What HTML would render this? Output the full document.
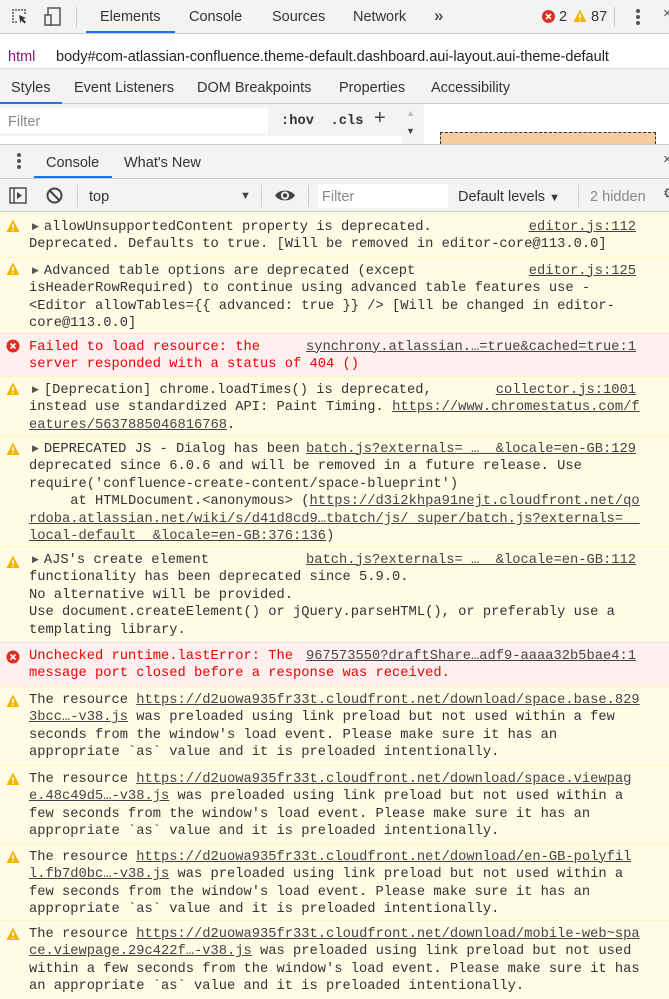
<!DOCTYPE html>
<html><head><meta charset="utf-8"><style>
*{margin:0;padding:0;box-sizing:border-box}
body{width:669px;height:999px;overflow:hidden;background:#fff;font-family:"Liberation Sans",sans-serif;font-size:14.5px;color:#333;position:relative}
.a{position:absolute}
.bar{position:absolute;left:0;width:669px}
.t{position:absolute;top:0;color:#333}
.mono{font-family:"Liberation Mono",monospace;font-size:13.75px;line-height:17.6px;white-space:pre}
.row{position:absolute;left:0;width:669px;padding:4.5px 0 0 29px;border-top:1px solid #fff5c2}
.w{background:#fffbe5;color:#333}
.e{background:#fff0f0;color:#e00;border-top-color:#ffd6d6}
.src{position:absolute;right:33px;top:4.5px;color:#444;text-decoration:underline}
.u{text-decoration:underline;color:#444}
.ic{position:absolute;left:6px;top:6px;width:14px;height:14px}
.tri{font-size:9px;color:#555;vertical-align:1px;margin:0 5px 0 3px}
</style></head><body>
<!-- top toolbar -->
<div class="bar" style="top:0;height:34px;background:#f3f3f3;border-bottom:1px solid #ccc"></div>
<svg class="a" style="left:10px;top:7px" width="20" height="20" viewBox="0 0 20 20"><path d="M7 15H3V3h12v4" fill="none" stroke="#555" stroke-width="1.5" stroke-dasharray="2 1"/><path d="M9 8l7 3-3 1 3 3-1.5 1.5-3-3-1 3z" fill="#333"/></svg>
<svg class="a" style="left:42px;top:6px" width="22" height="22" viewBox="0 0 22 22"><rect x="6" y="2" width="12" height="17" fill="none" stroke="#555" stroke-width="1.5"/><rect x="3" y="9" width="6" height="10" fill="#f3f3f3" stroke="#555" stroke-width="1.5"/></svg>
<div class="a" style="left:76px;top:7px;width:1px;height:20px;background:#ccc"></div>
<div class="t" style="left:100px;top:9px">Elements</div>
<div class="a" style="left:86px;top:31px;width:89px;height:2px;background:#1a73e8"></div>
<div class="t" style="left:189px;top:9px">Console</div>
<div class="t" style="left:272px;top:9px">Sources</div>
<div class="t" style="left:353px;top:9px">Network</div>
<div class="t" style="left:434px;top:6px;font-size:17px;font-weight:bold;color:#555">»</div>
<svg class="a" style="left:542px;top:10px" width="13" height="13"><circle cx="6.5" cy="6.5" r="6.5" fill="#d93025"/><path d="M4 4l5 5M9 4l-5 5" stroke="#fff" stroke-width="1.6"/></svg>
<div class="t" style="left:559px;top:9px">2</div>
<svg class="a" style="left:573px;top:9px" width="14" height="14"><path d="M7 0.5L13.5 13H0.5z" fill="#f4b400"/><path d="M7 5v4M7 10.5v1.3" stroke="#fff" stroke-width="1.6"/></svg>
<div class="t" style="left:591px;top:9px">87</div>
<div class="a" style="left:614px;top:7px;width:1px;height:20px;background:#ccc"></div>
<div class="a" style="left:636px;top:9px;width:4px;height:4px;border-radius:2px;background:#555;box-shadow:0 6px 0 #555,0 12px 0 #555"></div>
<div class="t" style="left:663px;top:6px;color:#555">×</div>
<!-- breadcrumb -->
<div class="bar" style="top:34px;height:35px;background:#fff;border-bottom:1px solid #ddd"></div>
<div class="t" style="left:8px;top:49px;color:#881280">html</div>
<div class="t" style="left:56px;top:49px;color:#222">body#com-atlassian-confluence.theme-default.dashboard.aui-layout.aui-theme-default</div>
<!-- styles tabs -->
<div class="bar" style="top:69px;height:35px;background:#f3f3f3;border-bottom:1px solid #ccc"></div>
<div class="t" style="left:11px;top:80px">Styles</div>
<div class="a" style="left:0;top:102px;width:62px;height:2px;background:#1a73e8"></div>
<div class="t" style="left:74px;top:80px">Event Listeners</div>
<div class="t" style="left:197px;top:80px">DOM Breakpoints</div>
<div class="t" style="left:339px;top:80px">Properties</div>
<div class="t" style="left:431px;top:80px">Accessibility</div>
<!-- filter row -->
<div class="bar" style="top:104px;height:40px;background:#f3f3f3"></div>
<div class="a" style="left:0;top:108px;width:268px;height:25px;background:#fff"></div>
<div class="t" style="left:8px;top:114px;color:#888">Filter</div>
<div class="t mono" style="left:281px;top:113px;font-weight:bold;color:#333">:hov  .cls</div>
<div class="t" style="left:374px;top:107px;font-size:20px;color:#444">+</div>
<div class="t" style="left:406px;top:108px;font-size:9px;color:#bbb">▲</div>
<div class="t" style="left:406px;top:126px;font-size:9px;color:#444">▼</div>
<div class="a" style="left:0;top:136px;width:402px;height:8px;background:#fff"></div>
<div class="a" style="left:424px;top:104px;width:245px;height:40px;background:#fff"></div>
<div class="a" style="left:440px;top:132px;width:216px;height:12px;background:#f9cc9d;border:1px dashed #333;border-bottom:none"></div>
<!-- drawer tabs -->
<div class="bar" style="top:144px;height:35px;background:#f3f3f3;border-top:1px solid #ccc;border-bottom:1px solid #ccc"></div>
<div class="a" style="left:17px;top:153px;width:4px;height:4px;border-radius:2px;background:#555;box-shadow:0 6px 0 #555,0 12px 0 #555"></div>
<div class="t" style="left:46px;top:155px">Console</div>
<div class="a" style="left:34px;top:176px;width:78px;height:2px;background:#1a73e8"></div>
<div class="t" style="left:124px;top:155px">What's New</div>
<div class="t" style="left:663px;top:152px;color:#555">×</div>
<!-- console toolbar -->
<div class="bar" style="top:179px;height:33px;background:#f3f3f3;border-bottom:1px solid #ccc"></div>
<svg class="a" style="left:9px;top:187px" width="18" height="17"><rect x="1" y="1" width="16" height="15" fill="none" stroke="#444" stroke-width="1.4"/><path d="M5 1v15" stroke="#444" stroke-width="1.4"/><path d="M8 5l5 3.5-5 3.5z" fill="#444"/></svg>
<svg class="a" style="left:46px;top:187px" width="17" height="17"><circle cx="8.5" cy="8.5" r="7" fill="none" stroke="#444" stroke-width="2"/><path d="M4 4l9 9" stroke="#444" stroke-width="2"/></svg>
<div class="a" style="left:77px;top:185px;width:1px;height:22px;background:#ccc"></div>
<div class="t" style="left:89px;top:189px">top</div>
<div class="t" style="left:240px;top:190px;font-size:11px;color:#444">▼</div>
<div class="a" style="left:261px;top:185px;width:1px;height:22px;background:#ccc"></div>
<svg class="a" style="left:274px;top:187px" width="22" height="17"><path d="M1 8.5C5 2 17 2 21 8.5 17 15 5 15 1 8.5z" fill="#444"/><circle cx="11" cy="8.5" r="4" fill="#fff"/><circle cx="11" cy="8.5" r="2.3" fill="#444"/></svg>
<div class="a" style="left:308px;top:185px;width:1px;height:22px;background:#ccc"></div>
<div class="a" style="left:318px;top:184px;width:130px;height:24px;background:#fff"></div>
<div class="t" style="left:322px;top:189px;color:#888">Filter</div>
<div class="t" style="left:458px;top:189px">Default levels <span style="font-size:11px">▼</span></div>
<div class="a" style="left:578px;top:185px;width:1px;height:22px;background:#ccc"></div>
<div class="t" style="left:590px;top:189px;color:#888">2 hidden</div>
<div class="t" style="left:663px;top:186px;color:#444">⚙</div>

<!-- messages -->
<div class="row w mono" style="top:213px;height:44px"><span class="tri">▶</span>allowUnsupportedContent property is deprecated.
Deprecated. Defaults to true. [Will be removed in editor-core@113.0.0]<span class="src">editor.js:112</span></div>
<div class="row w mono" style="top:257px;height:76px"><span class="tri">▶</span>Advanced table options are deprecated (except
isHeaderRowRequired) to continue using advanced table features use -
&lt;Editor allowTables={{ advanced: true }} /&gt; [Will be changed in editor-
core@113.0.0]<span class="src">editor.js:125</span></div>
<div class="row e mono" style="top:333px;height:43px">Failed to load resource: the
server responded with a status of 404 ()<span class="src">synchrony.atlassian.…=true&amp;cached=true:1</span></div>
<div class="row w mono" style="top:376px;height:59px"><span class="tri">▶</span>[Deprecation] chrome.loadTimes() is deprecated,
instead use standardized API: Paint Timing. <span class="u">https://www.chromestatus.com/f</span>
<span class="u">eatures/5637885046816768</span>.<span class="src">collector.js:1001</span></div>
<div class="row w mono" style="top:435px;height:111px"><span class="tri">▶</span>DEPRECATED JS - Dialog has been
deprecated since 6.0.6 and will be removed in a future release. Use
require('confluence-create-content/space-blueprint')
     at HTMLDocument.&lt;anonymous&gt; (<span class="u">https://d3i2khpa91nejt.cloudfront.net/qo</span>
<span class="u">rdoba.atlassian.net/wiki/s/d41d8cd9…tbatch/js/_super/batch.js?externals=__</span>
<span class="u">local-default__&amp;locale=en-GB:376:136</span>)<span class="src">batch.js?externals=_…__&amp;locale=en-GB:129</span></div>
<div class="row w mono" style="top:546px;height:96px"><span class="tri">▶</span>AJS's create element
functionality has been deprecated since 5.9.0.
No alternative will be provided.
Use document.createElement() or jQuery.parseHTML(), or preferably use a
templating library.<span class="src">batch.js?externals=_…__&amp;locale=en-GB:112</span></div>
<div class="row e mono" style="top:642px;height:44px">Unchecked runtime.lastError: The
message port closed before a response was received.<span class="src">967573550?draftShare…adf9-aaaa32b5bae4:1</span></div>
<div class="row w mono" style="top:686px;height:79px">The resource <span class="u">https://d2uowa935fr33t.cloudfront.net/download/space.base.829</span>
<span class="u">3bcc…-v38.js</span> was preloaded using link preload but not used within a few
seconds from the window's load event. Please make sure it has an
appropriate `as` value and it is preloaded intentionally.</div>
<div class="row w mono" style="top:765px;height:78px">The resource <span class="u">https://d2uowa935fr33t.cloudfront.net/download/space.viewpag</span>
<span class="u">e.48c49d5…-v38.js</span> was preloaded using link preload but not used within a
few seconds from the window's load event. Please make sure it has an
appropriate `as` value and it is preloaded intentionally.</div>
<div class="row w mono" style="top:843px;height:77px">The resource <span class="u">https://d2uowa935fr33t.cloudfront.net/download/en-GB-polyfil</span>
<span class="u">l.fb7d0bc…-v38.js</span> was preloaded using link preload but not used within a
few seconds from the window's load event. Please make sure it has an
appropriate `as` value and it is preloaded intentionally.</div>
<div class="row w mono" style="top:920px;height:79px">The resource <span class="u">https://d2uowa935fr33t.cloudfront.net/download/mobile-web~spa</span>
<span class="u">ce.viewpage.29c422f…-v38.js</span> was preloaded using link preload but not used
within a few seconds from the window's load event. Please make sure it has
an appropriate `as` value and it is preloaded intentionally.</div>

<!-- icons -->
<svg class="ic" style="top:219px" viewBox="0 0 14 14"><path d="M7 0.5L13.5 13H0.5z" fill="#f4b400"/><path d="M7 5v4M7 10.3v1.4" stroke="#fff" stroke-width="1.6"/></svg>
<svg class="ic" style="top:262px" viewBox="0 0 14 14"><path d="M7 0.5L13.5 13H0.5z" fill="#f4b400"/><path d="M7 5v4M7 10.3v1.4" stroke="#fff" stroke-width="1.6"/></svg>
<svg class="ic" style="top:339px" viewBox="0 0 14 14"><circle cx="7" cy="7" r="6.5" fill="#d93025"/><path d="M4.5 4.5l5 5M9.5 4.5l-5 5" stroke="#fff" stroke-width="1.6"/></svg>
<svg class="ic" style="top:382px" viewBox="0 0 14 14"><path d="M7 0.5L13.5 13H0.5z" fill="#f4b400"/><path d="M7 5v4M7 10.3v1.4" stroke="#fff" stroke-width="1.6"/></svg>
<svg class="ic" style="top:442px" viewBox="0 0 14 14"><path d="M7 0.5L13.5 13H0.5z" fill="#f4b400"/><path d="M7 5v4M7 10.3v1.4" stroke="#fff" stroke-width="1.6"/></svg>
<svg class="ic" style="top:555px" viewBox="0 0 14 14"><path d="M7 0.5L13.5 13H0.5z" fill="#f4b400"/><path d="M7 5v4M7 10.3v1.4" stroke="#fff" stroke-width="1.6"/></svg>
<svg class="ic" style="top:650px" viewBox="0 0 14 14"><circle cx="7" cy="7" r="6.5" fill="#d93025"/><path d="M4.5 4.5l5 5M9.5 4.5l-5 5" stroke="#fff" stroke-width="1.6"/></svg>
<svg class="ic" style="top:694px" viewBox="0 0 14 14"><path d="M7 0.5L13.5 13H0.5z" fill="#f4b400"/><path d="M7 5v4M7 10.3v1.4" stroke="#fff" stroke-width="1.6"/></svg>
<svg class="ic" style="top:772px" viewBox="0 0 14 14"><path d="M7 0.5L13.5 13H0.5z" fill="#f4b400"/><path d="M7 5v4M7 10.3v1.4" stroke="#fff" stroke-width="1.6"/></svg>
<svg class="ic" style="top:850px" viewBox="0 0 14 14"><path d="M7 0.5L13.5 13H0.5z" fill="#f4b400"/><path d="M7 5v4M7 10.3v1.4" stroke="#fff" stroke-width="1.6"/></svg>
<svg class="ic" style="top:927px" viewBox="0 0 14 14"><path d="M7 0.5L13.5 13H0.5z" fill="#f4b400"/><path d="M7 5v4M7 10.3v1.4" stroke="#fff" stroke-width="1.6"/></svg>
</body></html>
